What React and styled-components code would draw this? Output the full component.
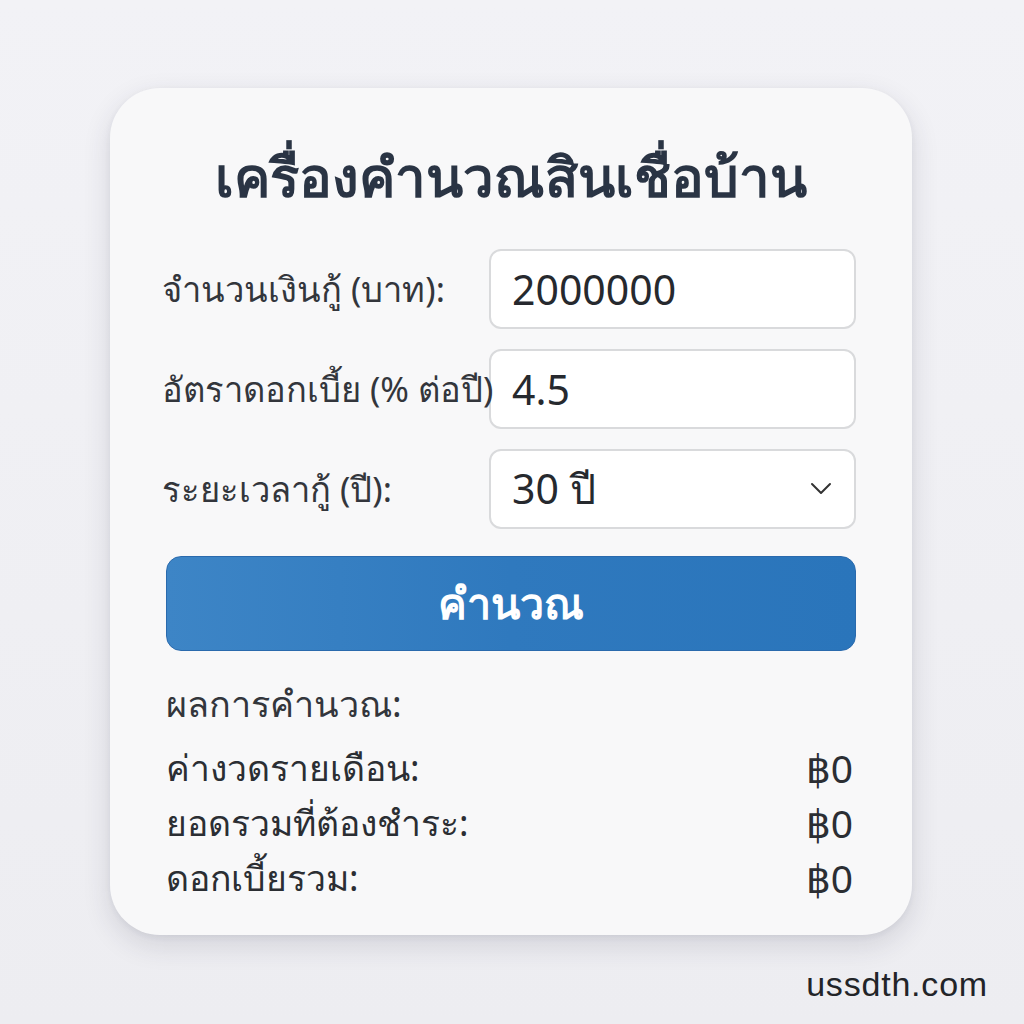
import React from "react";
import styled, { createGlobalStyle } from "styled-components";

const Global = createGlobalStyle`
  html, body { margin: 0; padding: 0; }
  body {
    width: 1024px;
    height: 1024px;
    background: linear-gradient(180deg, #f2f2f6 0%, #ededf1 100%);
    font-family: "Noto Sans", sans-serif;
    color: #2b2f36;
    overflow: hidden;
  }
`;

const Page = styled.div`
  width: 1024px;
  height: 1024px;
  box-sizing: border-box;
  padding-top: 88px;
  display: flex;
  flex-direction: column;
  align-items: center;
`;

const Card = styled.div`
  width: 802px;
  height: 847px;
  margin-left: -2px;
  box-sizing: border-box;
  background: #f8f8f9;
  border-radius: 50px;
  box-shadow: 0 10px 28px rgba(40, 45, 70, 0.14), 0 2px 6px rgba(40, 45, 70, 0.06);
  padding: 40px 56px 0 56px;
  display: flex;
  flex-direction: column;
`;

const Title = styled.h1`
  margin: 0 0 25px;
  text-align: center;
  font-size: 54.5px;
  font-weight: 700;
  line-height: 96px;
  color: #2a3444;
  white-space: nowrap;
`;

const Form = styled.div`
  display: flex;
  flex-direction: column;
  gap: 20px;
`;

const Row = styled.div`
  display: grid;
  grid-template-columns: 323px 367px;
  align-items: center;
  height: 80px;
`;

const Label = styled.label`
  position: relative;
  z-index: 1;
  font-size: 34.5px;
  color: #33363c;
  white-space: nowrap;
  margin-left: -4px;
`;

const Field = styled.div`
  height: 80px;
  box-sizing: border-box;
  border: 2px solid #d9dadc;
  border-radius: 12px;
  background: #ffffff;
  display: flex;
  align-items: center;
  justify-content: space-between;
  padding: 0 22px 0 21px;
  font-size: 41px;
  color: #26292e;
`;

const Chevron = styled.svg`
  flex: none;
`;

const Button = styled.button`
  margin-top: 27px;
  height: 95px;
  border: 1px solid #2a6aad;
  border-radius: 15px;
  background: linear-gradient(90deg, #3d85c6 0%, #2f79be 50%, #2a75bb 100%);
  color: #ffffff;
  font-family: inherit;
  font-size: 43px;
  font-weight: 700;
  cursor: pointer;
`;

const Results = styled.div`
  margin-top: 28px;
  display: flex;
  flex-direction: column;
  padding-right: 3px;
`;

const ResultsTitle = styled.div`
  font-size: 36px;
  color: #33363c;
  line-height: 50px;
  margin-bottom: 11px;
`;

const ResultRow = styled.div`
  display: flex;
  justify-content: space-between;
  align-items: center;
  font-size: 35.5px;
  color: #2b2e33;
  line-height: 55px;
`;

const Amount = styled.span`
  font-size: 39px;
`;

const Footer = styled.div`
  align-self: flex-end;
  margin-top: 30px;
  margin-right: 36px;
  font-family: "Liberation Sans", Arial, sans-serif;
  font-size: 34px;
  letter-spacing: 0.8px;
  color: #222428;
`;

export default function App() {
  return (
    <>
      <Global />
      <Page>
        <Card>
          <Title>เครื่องคำนวณสินเชื่อบ้าน</Title>
          <Form>
            <Row>
              <Label>จำนวนเงินกู้ (บาท):</Label>
              <Field>2000000</Field>
            </Row>
            <Row>
              <Label>อัตราดอกเบี้ย (% ต่อปี)</Label>
              <Field>4.5</Field>
            </Row>
            <Row>
              <Label>ระยะเวลากู้ (ปี):</Label>
              <Field>
                <span>30 ปี</span>
                <Chevron width="22" height="14" viewBox="0 0 22 14" fill="none">
                  <path d="M2 2l9 9 9-9" stroke="#333" strokeWidth="2" strokeLinecap="round" strokeLinejoin="round" />
                </Chevron>
              </Field>
            </Row>
          </Form>
          <Button>คำนวณ</Button>
          <Results>
            <ResultsTitle>ผลการคำนวณ:</ResultsTitle>
            <ResultRow>
              <span>ค่างวดรายเดือน:</span>
              <Amount>฿0</Amount>
            </ResultRow>
            <ResultRow>
              <span>ยอดรวมที่ต้องชำระ:</span>
              <Amount>฿0</Amount>
            </ResultRow>
            <ResultRow>
              <span>ดอกเบี้ยรวม:</span>
              <Amount>฿0</Amount>
            </ResultRow>
          </Results>
        </Card>
        <Footer>ussdth.com</Footer>
      </Page>
    </>
  );
}
